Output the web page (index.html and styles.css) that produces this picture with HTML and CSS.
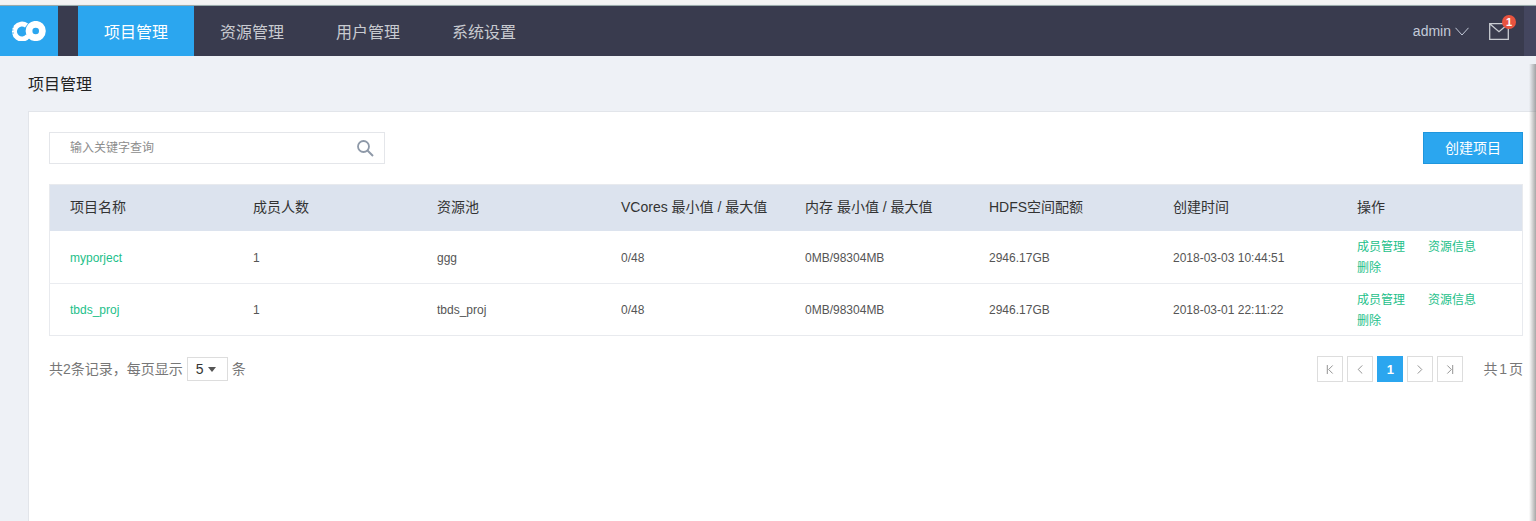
FILE: index.html
```html
<!doctype html>
<html lang="zh-CN">
  <head>
    <title>项目管理</title>
    <meta charset="UTF-8">
    <link rel="stylesheet" href="styles.css">
  </head>
  <body>
<header class="topbar">
  <a class="logo">
    <svg width="36" height="20" viewBox="0 0 36 20">
      <path d="M15.500 4.600A7.500 7.500 0 1 0 17 15" fill="none" stroke="#fff" stroke-width="5"/>
      <circle cx="24.700" cy="10" r="6.700" fill="none" stroke="#fff" stroke-width="6.800"/>
      <path d="M0 6h3M0 9h2.500M0 12h3" stroke="#2ba6ef" stroke-width=".8"/>
    </svg>
  </a>
  <nav class="nav">
    <a class="nav-item active">项目管理</a>
    <a class="nav-item">资源管理</a>
    <a class="nav-item">用户管理</a>
    <a class="nav-item">系统设置</a>
  </nav>
  <div class="user">
    <span class="user-name">admin</span>
    <svg class="chevron" width="14" height="9" viewBox="0 0 14 9"><path d="M.5.8 7 8 13.500.8" fill="none" stroke="#c3cad8"/></svg>
    <span class="mail">
      <svg width="20" height="17" viewBox="0 0 20 17"><path d="M.7.7h18.600v15.600H.7zM.7.7l9.300 8 9.300-8" fill="none" stroke="#c9ccd2" stroke-width="1.300"/></svg>
      <b class="badge">1</b>
    </span>
  </div>
  <div class="topbar-end"></div>
</header>
<main class="page">
  <h1 class="page-title">项目管理</h1>
  <section class="panel">
    <div class="toolbar">
      <label class="search">
        <input class="search-input" placeholder="输入关键字查询">
        <svg width="18" height="18" viewBox="0 0 18 18"><circle cx="7.500" cy="7.500" r="5.500" fill="none" stroke="#8e99a8" stroke-width="1.800"/><path d="M11.500 11.500 17 17" stroke="#8e99a8" stroke-width="2"/></svg>
      </label>
      <button class="create">创建项目</button>
    </div>
    <table class="grid">
      <colgroup>
        <col class="col-first">
        <col class="col-second">
        <col class="col">
        <col class="col">
        <col class="col">
        <col class="col">
        <col class="col">
        <col>
      </colgroup>
      <thead>
        <tr>
          <th>项目名称</th>
          <th>成员人数</th>
          <th>资源池</th>
          <th>VCores 最小值 / 最大值</th>
          <th>内存 最小值 / 最大值</th>
          <th>HDFS空间配额</th>
          <th>创建时间</th>
          <th>操作</th>
        </tr>
      </thead>
      <tbody>
        <tr>
          <td><a class="link">myporject</a></td>
          <td>1</td>
          <td>ggg</td>
          <td>0/48</td>
          <td>0MB/98304MB</td>
          <td>2946.17GB</td>
          <td>2018-03-03 10:44:51</td>
          <td class="ops"><a class="link">成员管理</a><a class="link">资源信息</a><a class="link">删除</a></td>
        </tr>
        <tr>
          <td><a class="link">tbds_proj</a></td>
          <td>1</td>
          <td>tbds_proj</td>
          <td>0/48</td>
          <td>0MB/98304MB</td>
          <td>2946.17GB</td>
          <td>2018-03-01 22:11:22</td>
          <td class="ops"><a class="link">成员管理</a><a class="link">资源信息</a><a class="link">删除</a></td>
        </tr>
      </tbody>
    </table>
    <div class="footer">
      <div class="count">
        <span class="note">共2条记录，每页显示</span>
        <span class="size">5<i class="caret"></i></span>
        <span class="note">条</span>
      </div>
      <div class="pager">
        <a class="page-btn"><svg width="8" height="10" viewBox="0 0 8 10"><path d="M1 0v10M7 .5 2.500 5 7 9.500" fill="none" stroke="#888"/></svg></a>
        <a class="page-btn"><svg width="6" height="10" viewBox="0 0 6 10"><path d="M5.500.5 1 5l4.500 4.500" fill="none" stroke="#888"/></svg></a>
        <a class="page-btn current">1</a>
        <a class="page-btn"><svg width="6" height="10" viewBox="0 0 6 10"><path d="M.5.5 5 5 .5 9.500" fill="none" stroke="#888"/></svg></a>
        <a class="page-btn"><svg width="8" height="10" viewBox="0 0 8 10"><path d="M7 0v10M1 .5 5.500 5 1 9.500" fill="none" stroke="#888"/></svg></a>
        <span class="note total">共 1 页</span>
      </div>
    </div>
  </section>
</main>
<div class="edge"></div>
  </body>
</html>
```

FILE: styles.css
```css
html, body {
  margin: 0;
  height: 521px;
  overflow: hidden;
  font-family: "Liberation Sans", "Noto Sans CJK SC", sans-serif;
  font-size: 12px;
  color: #555;
}
body {
  display: flex;
  flex-direction: column;
  padding-top: 5px;
  box-sizing: border-box;
  background: #f3f3f3;
}
.topbar {
  display: flex;
  height: 51px;
  box-sizing: border-box;
  flex: none;
  background: #393b4e;
  border-top: 1px solid #9aa;
  box-shadow: 0 1px 2px #aab0c8;
}
.logo {
  width: 58px;
  background: #2ba6ef;
  display: flex;
  align-items: center;
  justify-content: center;
}
.nav {
  display: flex;
  margin-left: 20px;
}
.nav-item {
  padding: 0 26px;
  display: flex;
  align-items: center;
  white-space: nowrap;
  font-size: 16px;
  color: #c8cad0;
}
.nav-item.active {
  background: #2ba6ef;
  color: #fff;
}
.user {
  margin-left: auto;
  display: flex;
  align-items: center;
  color: #c3cad8;
  font-size: 14px;
}
.chevron {
  margin-left: 4px;
}
.mail {
  position: relative;
  display: flex;
  margin-left: 20px;
  margin-right: 15px;
}
.badge {
  position: absolute;
  top: -8px;
  right: -7px;
  width: 14px;
  height: 14px;
  border-radius: 50%;
  background: #e8533f;
  color: #fff;
  font-size: 11px;
  line-height: 14px;
  text-align: center;
}
.topbar-end {
  width: 12px;
  background: #44465f;
}
.page {
  flex: 1;
  background: #eef1f6;
  padding-left: 28px;
}
.page-title {
  margin: 0;
  height: 55px;
  line-height: 58px;
  font-size: 16px;
  font-weight: normal;
  color: #222;
}
.panel {
  height: 409px;
  padding: 20px 13px 0 20px;
  background: #fff;
  border: 1px solid #e2e5ea;
  border-right: 0;
}
.toolbar {
  display: flex;
  justify-content: space-between;
  align-items: flex-start;
}
.search {
  width: 336px;
  height: 32px;
  box-sizing: border-box;
  border: 1px solid #e4e6ea;
  display: flex;
  align-items: center;
  padding: 0 10px 0 20px;
}
.search-input {
  flex: 1;
  min-width: 0;
  border: 0;
  padding: 0;
  outline: 0;
  font: inherit;
}
.search-input::placeholder {
  color: #8d8d8d;
}
.create {
  width: 100px;
  height: 32px;
  border: 1px solid #1f96dd;
  background: #2ba6ef;
  color: #fff;
  font: inherit;
  font-size: 14px;
  padding: 0 0 3px;
}
.grid {
  width: 100%;
  margin-top: 20px;
  border-collapse: collapse;
  table-layout: fixed;
  border: 1px solid #e8eaee;
  border-top: 0;
}
.col-first {
  width: 183.5px;
}
.col-second {
  width: 184px;
}
.col {
  width: 184px;
}
.grid th {
  height: 46px;
  padding: 0 0 3px 20px;
  box-sizing: border-box;
  background: #dce3ee;
  border-top: 1px solid #e8eaee;
  text-align: left;
  font-size: 14px;
  font-weight: normal;
  color: #333;
}
.grid td {
  height: 52px;
  padding: 1px 0 0 20px;
  box-sizing: border-box;
  border-top: 1px solid #eaecf0;
  color: #555;
}
.grid tbody tr:first-child td {
  height: 53px;
  padding-top: 3px;
  border-top: 0;
}
.grid td.ops {
  padding-top: 3px;
  line-height: 21px;
}
.link {
  color: #1dbf8a;
}
.ops .link {
  display: inline-block;
  margin-right: 23px;
}
.footer {
  display: flex;
  justify-content: space-between;
  align-items: center;
  margin-top: 20px;
  height: 26px;
}
.count {
  display: flex;
  align-items: center;
}
.note {
  padding-bottom: 3px;
  font-size: 14px;
  color: #777;
}
.size {
  width: 41px;
  height: 24px;
  margin: 0 4px;
  box-sizing: border-box;
  border: 1px solid #ddd;
  display: flex;
  align-items: center;
  padding-left: 8px;
  color: #333;
  font-size: 14px;
}
.caret {
  margin-left: 4px;
  border: 4px solid transparent;
  border-top: 5px solid #555;
  border-bottom: 0;
}
.pager {
  display: flex;
  align-items: center;
  gap: 4px;
}
.page-btn {
  width: 26px;
  height: 26px;
  box-sizing: border-box;
  border: 1px solid #ddd;
  display: flex;
  align-items: center;
  justify-content: center;
}
.page-btn svg {
  height: 9px;
}
.page-btn.current {
  background: #2ba6ef;
  border-color: #2ba6ef;
  color: #fff;
  font-weight: bold;
  font-size: 13px;
}
.total {
  margin-left: 16px;
  word-spacing: -2px;
}
/* shadow of the window lying next to this one */
.edge {
  position: absolute;
  top: 64px;
  right: 0;
  bottom: 0;
  width: 7px;
  background: linear-gradient(to right, rgba(120, 120, 120, 0), rgba(120, 120, 120, .65));
}
```
